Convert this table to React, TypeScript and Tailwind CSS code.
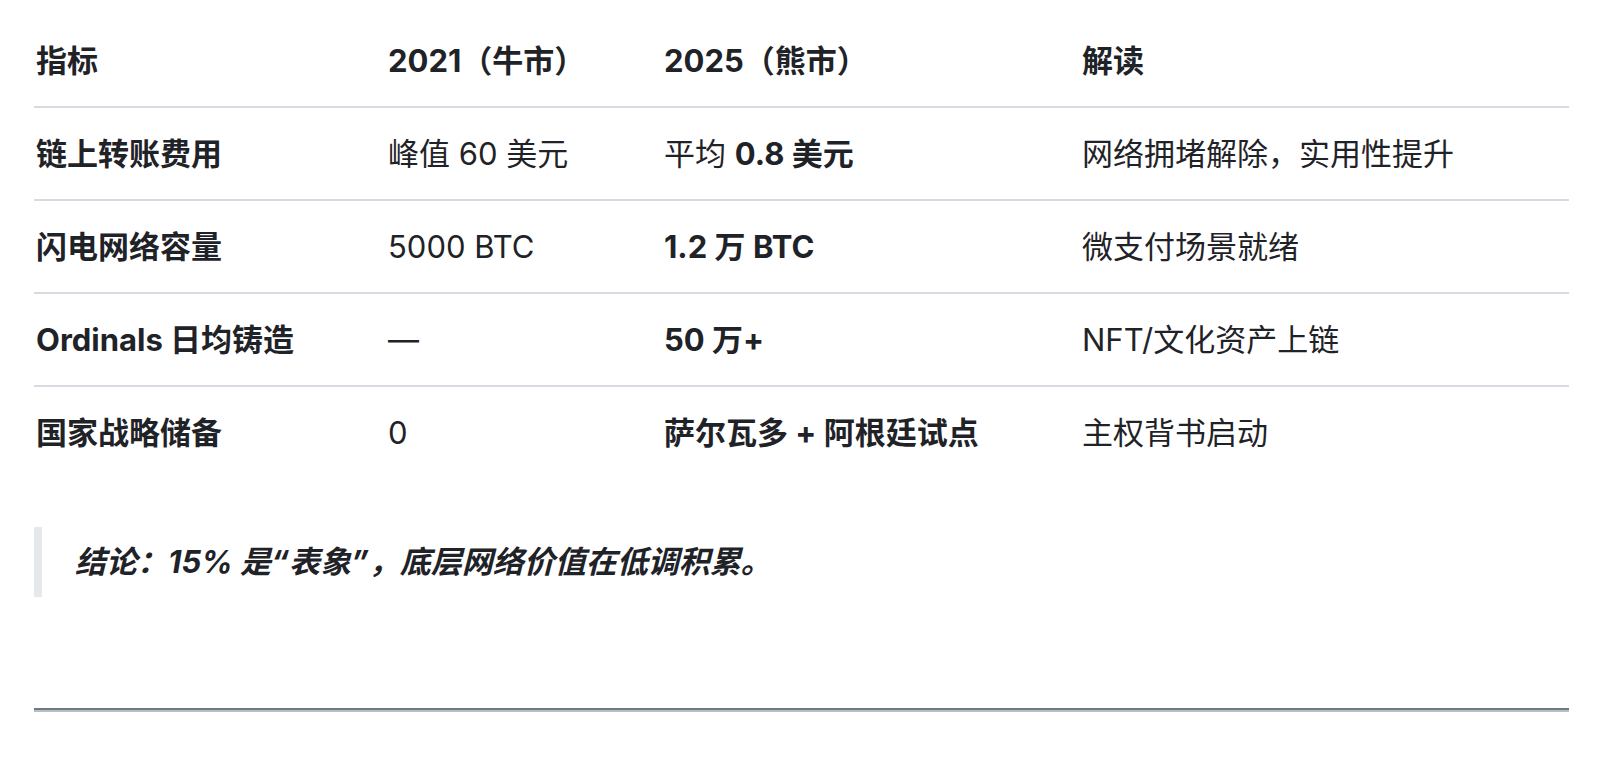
const rows = [
  {
    metric: '链上转账费用',
    y2021: '峰值 60 美元',
    y2025: (
      <>
        平均 <strong className="font-bold">0.8 美元</strong>
      </>
    ),
    note: '网络拥堵解除，实用性提升',
  },
  {
    metric: '闪电网络容量',
    y2021: '5000 BTC',
    y2025: <strong className="font-bold">1.2 万 BTC</strong>,
    note: '微支付场景就绪',
  },
  {
    metric: 'Ordinals 日均铸造',
    y2021: '—',
    y2025: <strong className="font-bold">50 万+</strong>,
    note: 'NFT/文化资产上链',
  },
  {
    metric: '国家战略储备',
    y2021: '0',
    y2025: <strong className="font-bold">萨尔瓦多 + 阿根廷试点</strong>,
    note: '主权背书启动',
  },
]

export default function App() {
  return (
    <div
      className="min-h-[766px] bg-white pl-[34px] pt-[15px] text-[#1f2328]"
      style={{ fontFamily: 'Inter, "Noto Sans CJK SC", sans-serif' }}
    >
      <div className="w-[1535px]">
        <table className="w-full table-fixed border-collapse text-left text-[31px] leading-[45px]">
          <colgroup>
            <col className="w-[352px]" />
            <col className="w-[276px]" />
            <col className="w-[418px]" />
            <col />
          </colgroup>
          <thead>
            <tr className="border-b-2 border-[#d5dbe0]">
              <th className="py-[23px] pl-[2px] font-bold">指标</th>
              <th className="py-[23px] pl-[2px] font-bold">2021（牛市）</th>
              <th className="py-[23px] pl-[2px] font-bold">2025（熊市）</th>
              <th className="py-[23px] pl-[2px] font-bold">解读</th>
            </tr>
          </thead>
          <tbody>
            {rows.map((row, i) => (
              <tr
                key={row.metric}
                className={i < rows.length - 1 ? 'border-b-2 border-[#d5dbe0]' : ''}
              >
                <td className="py-[23px] pl-[2px] font-bold">{row.metric}</td>
                <td className="py-[23px] pl-[2px]">{row.y2021}</td>
                <td className="py-[23px] pl-[2px]">{row.y2025}</td>
                <td className="py-[23px] pl-[2px]">{row.note}</td>
              </tr>
            ))}
          </tbody>
        </table>

        <blockquote className="mt-[49px] border-l-8 border-[#e6e9ec] py-3 pl-[33px] text-[31px] leading-[46px] font-bold italic">
          结论：15% 是“表象”，底层网络价值在低调积累。
        </blockquote>

        <hr className="mt-[111px] h-[4px] border-0 border-t-2 border-b-2 border-t-[#71787e] border-b-[#b4c0c7]" />
      </div>
    </div>
  )
}
